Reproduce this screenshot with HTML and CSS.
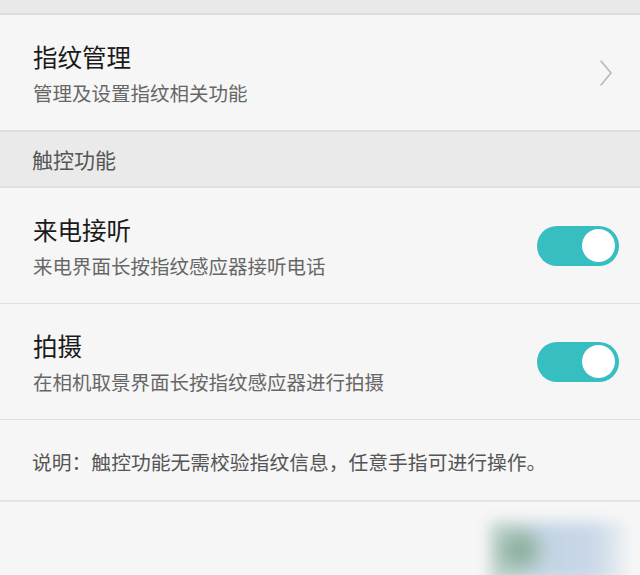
FILE: index.html
```html
<!DOCTYPE html>
<html lang="zh-CN">
<head>
    <meta charset="UTF-8">
    <meta name="viewport" content="width=device-width, initial-scale=1.0">
    <title>指纹设置</title>
    <link rel="stylesheet" href="styles.css">
</head>
<body>
    <div id="settings">
        <div class="top-band"></div>

        <div class="item">
            <div class="item-text">
                <div class="item-title">指纹管理</div>
                <div class="item-sub">管理及设置指纹相关功能</div>
            </div>
            <svg class="chevron" viewBox="0 0 14 26" fill="none" stroke="#b8b8b8" stroke-width="1.6" stroke-linecap="round" stroke-linejoin="round">
                <path d="M2 1l10 12L2 25"></path>
            </svg>
        </div>

        <div class="section-head">触控功能</div>

        <div class="item">
            <div class="item-text">
                <div class="item-title">来电接听</div>
                <div class="item-sub">来电界面长按指纹感应器接听电话</div>
            </div>
            <div class="toggle on"><span class="knob"></span></div>
        </div>

        <div class="item">
            <div class="item-text">
                <div class="item-title">拍摄</div>
                <div class="item-sub">在相机取景界面长按指纹感应器进行拍摄</div>
            </div>
            <div class="toggle on"><span class="knob"></span></div>
        </div>

        <div class="note">说明：触控功能无需校验指纹信息，任意手指可进行操作。</div>

        <div class="bottom">
            <div class="watermark"></div>
        </div>
    </div>
</body>
</html>
```

FILE: styles.css
```css
* {
    margin: 0;
    padding: 0;
    box-sizing: border-box;
}

body, html {
    width: 100%;
    height: 100%;
    overflow: hidden;
    background-color: #f6f6f6;
    font-family: "Noto Sans CJK SC", "Noto Sans", sans-serif;
}

#settings {
    display: flex;
    flex-direction: column;
    height: 100%;
}

.top-band {
    height: 15px;
    background-color: #e9e9e9;
    border-bottom: 2px solid #dddddd;
}

.item {
    display: flex;
    align-items: center;
    justify-content: space-between;
    height: 116px;
    padding: 0 21px 0 33px;
    border-bottom: 1px solid #dedede;
}

.item-text {
    display: flex;
    flex-direction: column;
    gap: 6px;
    margin-top: 2px;
}

.item-title {
    font-size: 24.5px;
    line-height: 32px;
    color: #1a1a1a;
}

.item-sub {
    font-size: 19.5px;
    line-height: 28px;
    color: #676767;
}

.chevron {
    width: 14px;
    height: 26px;
    margin-right: 6px;
}

.section-head {
    height: 57px;
    padding: 0 32px;
    display: flex;
    align-items: center;
    font-size: 21px;
    color: #555555;
    background-color: #eaeaea;
    border-top: 1px solid #dcdcdc;
    border-bottom: 2px solid #e0e0e0;
}

.toggle {
    width: 82px;
    height: 40px;
    border-radius: 20px;
    background-color: #36bec0;
    display: flex;
    align-items: center;
    justify-content: flex-end;
    padding: 0 4px;
}

.knob {
    width: 33px;
    height: 33px;
    border-radius: 50%;
    background-color: #ffffff;
}

.note {
    height: 82px;
    padding: 2px 32px 0;
    display: flex;
    align-items: center;
    font-size: 19.8px;
    color: #555555;
    border-bottom: 2px solid #e4e4e4;
}

.bottom {
    position: relative;
    flex: 1;
}

.watermark {
    position: absolute;
    left: 490px;
    top: 20px;
    width: 135px;
    height: 60px;
    background: radial-gradient(ellipse 30px 28px at 30px 28px, #74a088 0%, rgba(140, 176, 156, 0.6) 60%, rgba(190, 208, 226, 0) 100%),
        linear-gradient(90deg, #b8cfc4 0%, #bfd1e2 35%, #c4d4e6 75%, #e8edf2 100%);
    filter: blur(7px);
    opacity: 0.9;
}
```
